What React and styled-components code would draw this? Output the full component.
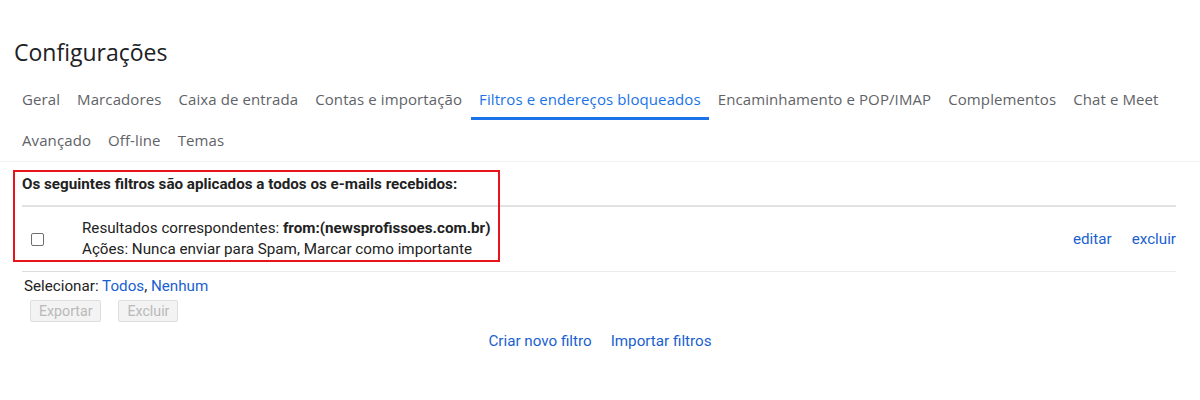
import React from 'react';
import styled, { createGlobalStyle } from 'styled-components';

const GlobalStyle = createGlobalStyle`
  html, body {
    margin: 0;
    padding: 0;
    background: #ffffff;
  }
  body {
    font-family: Roboto, "Liberation Sans", Arial, sans-serif;
    color: #222222;
  }
`;

const tabs = [
  ['Geral', 'Marcadores', 'Caixa de entrada', 'Contas e importação', 'Filtros e endereços bloqueados',
    'Encaminhamento e POP/IMAP', 'Complementos', 'Chat e Meet'],
  ['Avançado', 'Off-line', 'Temas'],
];

const ACTIVE = 'Filtros e endereços bloqueados';

const Page = styled.div`
  width: 1200px;
  min-height: 400px;
  box-sizing: border-box;
  padding-top: 38px;
`;

const Title = styled.h1`
  margin: 0;
  padding-left: 14px;
  font-family: "Open Sans", Roboto, sans-serif;
  font-size: 23px;
  font-weight: 400;
  line-height: 28px;
  color: #202124;
`;

const TabBar = styled.nav`
  margin-top: 14px;
  padding-left: 14px;
  border-bottom: 1px solid #f1f1f1;
  display: flex;
  flex-direction: column;
  gap: 1px;
`;

const TabRow = styled.div`
  display: flex;
  gap: 1px;
`;

const Tab = styled.div`
  height: 40px;
  box-sizing: border-box;
  padding: 0 8px;
  display: flex;
  align-items: center;
  font-family: "Open Sans", Roboto, sans-serif;
  font-size: 15px;
  letter-spacing: 0.1px;
  color: ${p => (p.$active ? '#1a73e8' : '#5f6368')};
  border-bottom: 3px solid ${p => (p.$active ? '#1a73e8' : 'transparent')};
  white-space: nowrap;
`;

const Content = styled.div`
  position: relative;
  padding: 0 24px 0 22px;
  font-size: 15.2px;
`;

const Heading = styled.div`
  font-weight: 700;
  line-height: 20px;
  padding: 12px 0 11px;
`;

const FilterRow = styled.div`
  display: flex;
  align-items: center;
  height: 67px;
  border-top: 2px solid #e2e2e2;
  border-bottom: 1px solid #ececec;
  box-sizing: border-box;
`;

const CheckCell = styled.div`
  width: 60px;
  padding-left: 9px;
  box-sizing: border-box;
  display: flex;
  align-items: center;
`;

const Checkbox = styled.span`
  width: 11px;
  height: 11px;
  border: 1px solid #6f6f6f;
  border-radius: 2px;
  background: #fff;
`;

const FilterText = styled.div`
  flex: 1;
  line-height: 21px;
  color: #222;
  b {
    font-weight: 700;
  }
`;

const Actions = styled.div`
  display: flex;
  gap: 20px;
`;

const Link = styled.span`
  color: #1a5fd0;
  cursor: pointer;
`;

const SelectBar = styled.div`
  position: relative;
  padding: 4px 0 0 2px;
  line-height: 20px;
  &::before {
    content: "";
    position: absolute;
    left: 0;
    top: -1px;
    width: 58px;
    height: 1px;
    background: #dcdcdc;
  }
`;

const ButtonRow = styled.div`
  display: flex;
  gap: 17px;
  margin: 4px 0 0 8px;
`;

const GrayButton = styled.button`
  height: 22px;
  padding: 0 8px;
  font-family: Roboto, sans-serif;
  font-size: 14.2px;
  line-height: 20px;
  color: #b9b9b9;
  background: #f3f3f3;
  border: 1px solid #dedede;
  border-radius: 2px;
`;

const BottomLinks = styled.div`
  display: flex;
  justify-content: center;
  gap: 19px;
  margin-top: 9px;
  line-height: 20px;
  padding-left: 2px;
`;

const Annotation = styled.div`
  position: absolute;
  left: 13px;
  top: 8px;
  width: 487px;
  height: 92px;
  border: 2px solid #e8141c;
  box-sizing: border-box;
  pointer-events: none;
`;

export default function App() {
  return (
    <>
      <GlobalStyle />
      <Page>
        <Title>Configurações</Title>
        <TabBar>
          {tabs.map((row, i) => (
            <TabRow key={i}>
              {row.map(t => (
                <Tab key={t} $active={t === ACTIVE}>{t}</Tab>
              ))}
            </TabRow>
          ))}
        </TabBar>
        <Content>
          <Heading>Os seguintes filtros são aplicados a todos os e-mails recebidos:</Heading>
          <FilterRow>
            <CheckCell>
              <Checkbox />
            </CheckCell>
            <FilterText>
              <div>Resultados correspondentes: <b>from:(newsprofissoes.com.br)</b></div>
              <div>Ações: Nunca enviar para Spam, Marcar como importante</div>
            </FilterText>
            <Actions>
              <Link>editar</Link>
              <Link>excluir</Link>
            </Actions>
          </FilterRow>
          <SelectBar>
            Selecionar: <Link>Todos</Link>, <Link>Nenhum</Link>
          </SelectBar>
          <ButtonRow>
            <GrayButton disabled>Exportar</GrayButton>
            <GrayButton disabled>Excluir</GrayButton>
          </ButtonRow>
          <BottomLinks>
            <Link>Criar novo filtro</Link>
            <Link>Importar filtros</Link>
          </BottomLinks>
          <Annotation />
        </Content>
      </Page>
    </>
  );
}
